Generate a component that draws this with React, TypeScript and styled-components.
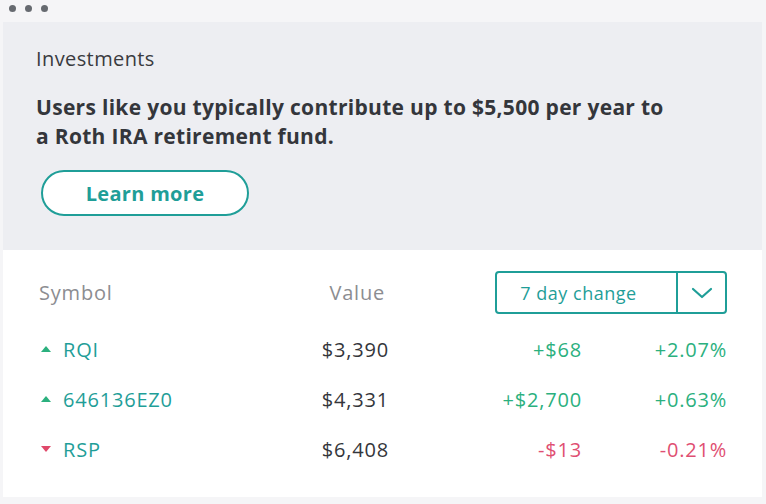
import React from "react";
import styled, { createGlobalStyle } from "styled-components";

const Global = createGlobalStyle`
  html, body { margin: 0; padding: 0; background: #f5f5f7; }
  body { font-family: "Open Sans", Lato, sans-serif; }
`;

const Frame = styled.div`
  width: 766px;
  height: 504px;
  box-sizing: border-box;
  padding: 0 4px 7px 3px;
  display: flex;
  flex-direction: column;
  background: #f5f5f7;
`;

const TitleBar = styled.div`
  height: 22px;
  display: flex;
  align-items: flex-start;
  gap: 9px;
  padding: 5px 0 0 6px;
  box-sizing: border-box;
`;

const Dot = styled.span`
  width: 7px;
  height: 7px;
  border-radius: 50%;
  background: #666a70;
`;

const Card = styled.div`
  flex: 1;
  display: flex;
  flex-direction: column;
  background: #fff;
`;

const Promo = styled.section`
  height: 228px;
  background: #edeef2;
  box-sizing: border-box;
  padding: 24px 0 0 33px;
  display: flex;
  flex-direction: column;
  align-items: flex-start;
`;

const Eyebrow = styled.div`
  font-size: 20px;
  letter-spacing: 0.4px;
  color: #3a3b3f;
  line-height: 26px;
`;

const Headline = styled.p`
  margin: 21px 0 0;
  font-size: 21px;
  font-weight: 700;
  letter-spacing: 0.3px;
  line-height: 29px;
  color: #34363b;
  width: 632px;
`;

const PillButton = styled.button`
  margin: 19px 0 0 5px;
  width: 208px;
  height: 46px;
  border: 2px solid #1f9e98;
  border-radius: 23px;
  background: #fff;
  color: #1f9e98;
  font-family: inherit;
  font-size: 20px;
  letter-spacing: 0.3px;
  font-weight: 700;
  cursor: pointer;
`;

const Table = styled.div`
  padding: 21px 35px 0 35px;
  display: grid;
  grid-template-columns: 25px 1fr 120px 193px 145px;
  align-items: center;
  font-size: 20px;
  letter-spacing: 0.8px;
`;

const HeadCell = styled.div<{ $align?: string; $span?: number }>`
  grid-column: span ${(p) => p.$span || 1};
  height: 43px;
  display: flex;
  align-items: center;
  justify-content: ${(p) => p.$align || "flex-start"};
  padding: ${(p) => (p.$align ? "0 4px 0 0" : "0 0 0 1px")};
  color: #8c8d91;
`;

const Select = styled.div`
  grid-column: 4 / span 2;
  justify-self: end;
  width: 232px;
  height: 43px;
  box-sizing: border-box;
  border: 2px solid #1f9e98;
  border-radius: 4px;
  display: flex;
  color: #1f9e98;
  font-size: 18px;
  letter-spacing: 0.5px;
`;

const SelectLabel = styled.div`
  flex: 1;
  display: flex;
  align-items: center;
  justify-content: center;
  padding-right: 16px;
  border-right: 2px solid #1f9e98;
`;

const SelectArrow = styled.div`
  width: 47px;
  display: flex;
  align-items: center;
  justify-content: center;
`;

const Spacer = styled.div`
  grid-column: 1 / -1;
  height: 10px;
`;

const Cell = styled.div<{ $align?: string; $color?: string }>`
  height: 50px;
  display: flex;
  align-items: center;
  justify-content: ${(p) => p.$align || "flex-start"};
  color: ${(p) => p.$color || "#34363b"};
`;

const Tri = styled.span<{ $up: boolean }>`
  width: 0;
  height: 0;
  border-left: 5px solid transparent;
  border-right: 5px solid transparent;
  ${(p) =>
    p.$up
      ? "border-bottom: 6px solid #2bb07e;"
      : "border-top: 6px solid #e0486a;"}
  margin-left: 3px;
`;

const GREEN = "#2bb07e";
const RED = "#df4f72";
const TEAL = "#1f9e98";

const rows = [
  { sym: "RQI", value: "$3,390", change: "+$68", pct: "+2.07%", up: true },
  { sym: "646136EZ0", value: "$4,331", change: "+$2,700", pct: "+0.63%", up: true },
  { sym: "RSP", value: "$6,408", change: "-$13", pct: "-0.21%", up: false },
];

export default function App() {
  return (
    <>
      <Global />
      <Frame>
        <TitleBar>
          <Dot />
          <Dot />
          <Dot />
        </TitleBar>
        <Card>
          <Promo>
            <Eyebrow>Investments</Eyebrow>
            <Headline>
              Users like you typically contribute up to $5,500 per year to a Roth IRA retirement fund.
            </Headline>
            <PillButton>Learn more</PillButton>
          </Promo>
          <Table>
            <HeadCell $span={2}>Symbol</HeadCell>
            <HeadCell $align="flex-end">Value</HeadCell>
            <Select>
              <SelectLabel>7 day change</SelectLabel>
              <SelectArrow>
                <svg width="22" height="12" viewBox="0 0 22 12" fill="none">
                  <path d="M2 2 L11 10 L20 2" stroke={TEAL} strokeWidth="2.2" strokeLinecap="round" strokeLinejoin="round" />
                </svg>
              </SelectArrow>
            </Select>
            <Spacer />
            {rows.map((r) => (
              <React.Fragment key={r.sym}>
                <Cell>
                  <Tri $up={r.up} />
                </Cell>
                <Cell $color={TEAL}>{r.sym}</Cell>
                <Cell $align="flex-end">{r.value}</Cell>
                <Cell $align="flex-end" $color={r.up ? GREEN : RED}>{r.change}</Cell>
                <Cell $align="flex-end" $color={r.up ? GREEN : RED}>{r.pct}</Cell>
              </React.Fragment>
            ))}
          </Table>
        </Card>
      </Frame>
    </>
  );
}
